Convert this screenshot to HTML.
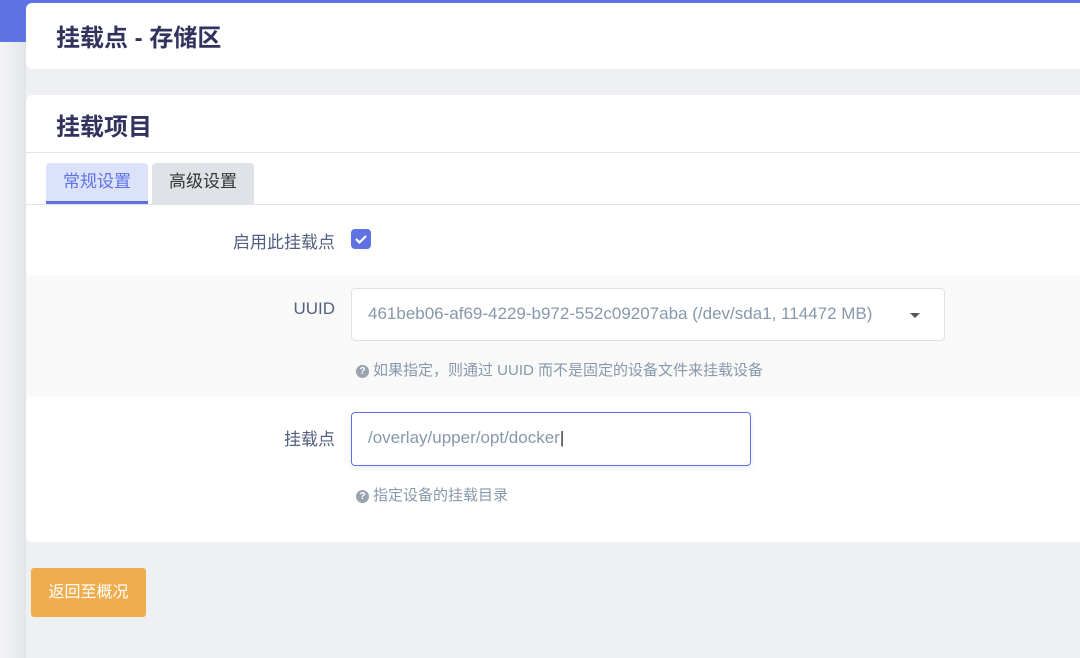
<!DOCTYPE html>
<html><head><meta charset="utf-8"><style>
*{box-sizing:border-box;margin:0;padding:0}
body{width:1080px;height:658px;overflow:hidden;background:#eef0f3;font-family:"Liberation Sans","Noto Sans CJK SC",sans-serif;position:relative}
.blue{position:absolute;left:0;top:0;width:1080px;height:42px;background:#5e72e4}
.side{position:absolute;left:0;top:42px;width:26px;height:616px;background:linear-gradient(90deg,#f4f5f7,#e2e4e8)}
.card{position:absolute;left:26px;width:1070px;background:#fff;border-radius:6px}
h1{font-size:24px;font-weight:bold;color:#32325d;position:absolute;left:30px;top:15px}
h2{font-size:24px;font-weight:bold;color:#32325d;position:absolute;left:30px;top:12px}
.abs{position:absolute}
.lbl{position:absolute;right:761px;font-size:17px;color:#525f7f;text-align:right}
.help{position:absolute;left:330px;font-size:15px;color:#8898aa}
.q{display:inline-block;width:13px;height:13px;border-radius:50%;background:#9aa3ae;color:#fff;font-size:10px;text-align:center;line-height:13px;font-weight:bold;margin-right:4px;vertical-align:1px}
</style></head><body>
<div class="blue"></div><div class="side"></div>
<div class="card" style="top:3px;height:66px"><h1>挂载点 - 存储区</h1></div>
<div class="card" style="top:95px;height:447px;overflow:hidden">
<h2>挂载项目</h2>
<div class="abs" style="left:0;top:57px;width:100%;height:1px;background:#e2e4e8"></div>
<div class="abs" style="left:20px;top:68px;width:102px;height:41px;background:#dde2fb;border-radius:4px 4px 0 0;border-bottom:3px solid #5e72e4;color:#5e72e4;font-size:17px;text-align:center;line-height:38px">常规设置</div>
<div class="abs" style="left:126px;top:68px;width:102px;height:41px;background:#dfe3e8;border-radius:4px 4px 0 0;color:#333;font-size:17px;text-align:center;line-height:38px">高级设置</div>
<div class="abs" style="left:0;top:109px;width:100%;height:1px;background:#e2e4e8"></div>
<div class="abs" style="left:0;top:180px;width:100%;height:122px;background:#f9f9fa"></div>
<div class="lbl" style="top:133px">启用此挂载点</div>
<div class="abs" style="left:325px;top:134px;width:20px;height:20px;background:#5e72e4;border-radius:4px"><svg width="20" height="20"><path d="M5 10l3.5 3.5L15 7" stroke="#fff" stroke-width="2.2" fill="none"/></svg></div>
<div class="lbl" style="top:204px">UUID</div>
<div class="abs" style="left:325px;top:193px;width:594px;height:53px;background:#fff;border:1px solid #dee2e6;border-radius:4px;font-size:17px;color:#8898aa;padding:15px 0 0 16px">461beb06-af69-4229-b972-552c09207aba (/dev/sda1, 114472 MB)<span class="abs" style="left:558px;top:24px;border:5px solid transparent;border-top:5px solid #555;border-bottom:none"></span></div>
<div class="help" style="top:264px"><span class="q">?</span>如果指定，则通过 UUID 而不是固定的设备文件来挂载设备</div>
<div class="lbl" style="top:330px">挂载点</div>
<div class="abs" style="left:325px;top:317px;width:400px;height:54px;background:#fff;border:1px solid #5e72e4;border-radius:4px;font-size:17px;color:#8898aa;padding:15px 0 0 16px;box-shadow:0 2px 6px rgba(94,114,228,.15)">/overlay/upper/opt/docker<span style="color:#333">|</span></div>
<div class="help" style="top:389px"><span class="q">?</span>指定设备的挂载目录</div>
</div>
<div class="abs" style="left:31px;top:568px;width:115px;height:49px;background:#f0ad4e;border-radius:3px;color:#fff;font-size:16px;text-align:center;line-height:49px">返回至概况</div>
</body></html>
